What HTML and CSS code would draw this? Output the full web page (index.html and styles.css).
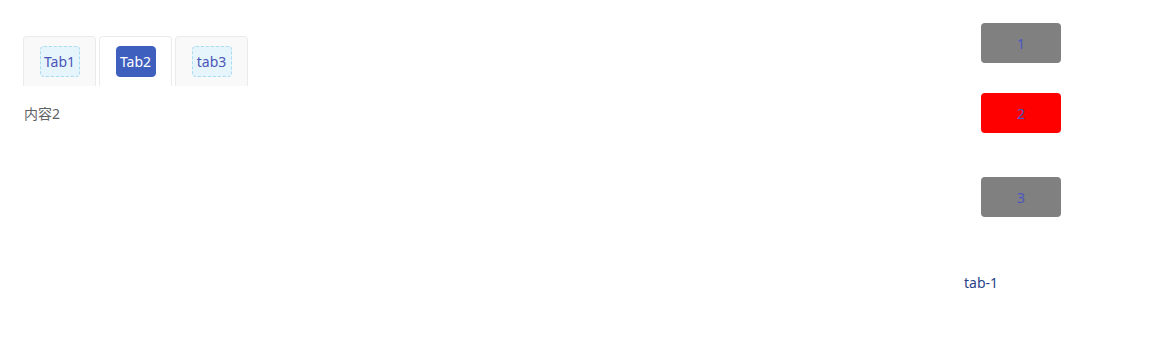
FILE: index.html
```html
<!DOCTYPE html>
<html>
<head>
<meta charset="utf-8">
<link rel="stylesheet" href="styles.css">
</head>
<body>
<div class="page">
  <div class="left">
    <div class="tabs">
      <div class="tab"><span class="label">Tab1</span></div>
      <div class="tab active"><span class="label">Tab2</span></div>
      <div class="tab"><span class="label">tab3</span></div>
    </div>
    <div class="content">内容2</div>
  </div>
  <div class="right">
    <div class="box">1</div>
    <div class="box red second">2</div>
    <div class="box third">3</div>
    <div class="caption">tab-1</div>
  </div>
</div>
</body>
</html>
```
FILE: styles.css
```css
html, body {
  margin: 0;
  padding: 0;
  background: #fff;
}
body {
  font-family: "Noto Sans", "Noto Sans CJK SC", sans-serif;
  font-size: 14px;
}
.page {
  display: flex;
  justify-content: space-between;
  width: 1152px;
  height: 350px;
}
.left {
  padding: 36px 0 0 23px;
}
.tabs {
  display: flex;
  gap: 3px;
}
.tab {
  width: 71px;
  height: 49px;
  border: 1px solid #ebebeb;
  border-bottom: none;
  border-radius: 4px 4px 0 0;
  background: #f9f9f9;
  display: flex;
  align-items: center;
  justify-content: center;
}
.tab.active {
  background: #fff;
}
.label {
  box-sizing: border-box;
  width: 40px;
  height: 31px;
  border: 1px dashed #a8dcf2;
  border-radius: 4px;
  background: #e6f4fb;
  color: #4a55b8;
  display: flex;
  align-items: center;
  justify-content: center;
  line-height: 1;
}
.tab.active .label {
  background: #3f5fbf;
  border: 1px solid #3f5fbf;
  color: #fff;
}
.content {
  margin-top: 18px;
  color: #606266;
  line-height: 20px;
  padding-left: 1px;
}
.right {
  width: 97px;
  margin-right: 91px;
  padding-top: 23px;
  display: flex;
  flex-direction: column;
  align-items: flex-end;
}
.box {
  width: 80px;
  height: 40px;
  border-radius: 4px;
  background: #808080;
  color: #4a55c0;
  display: flex;
  align-items: center;
  justify-content: center;
}
.box.red {
  background: #ff0000;
}
.second {
  margin-top: 30px;
}
.third {
  margin-top: 44px;
}
.caption {
  align-self: flex-start;
  margin-top: 56px;
  color: #2a3f8a;
  line-height: 20px;
}
```
